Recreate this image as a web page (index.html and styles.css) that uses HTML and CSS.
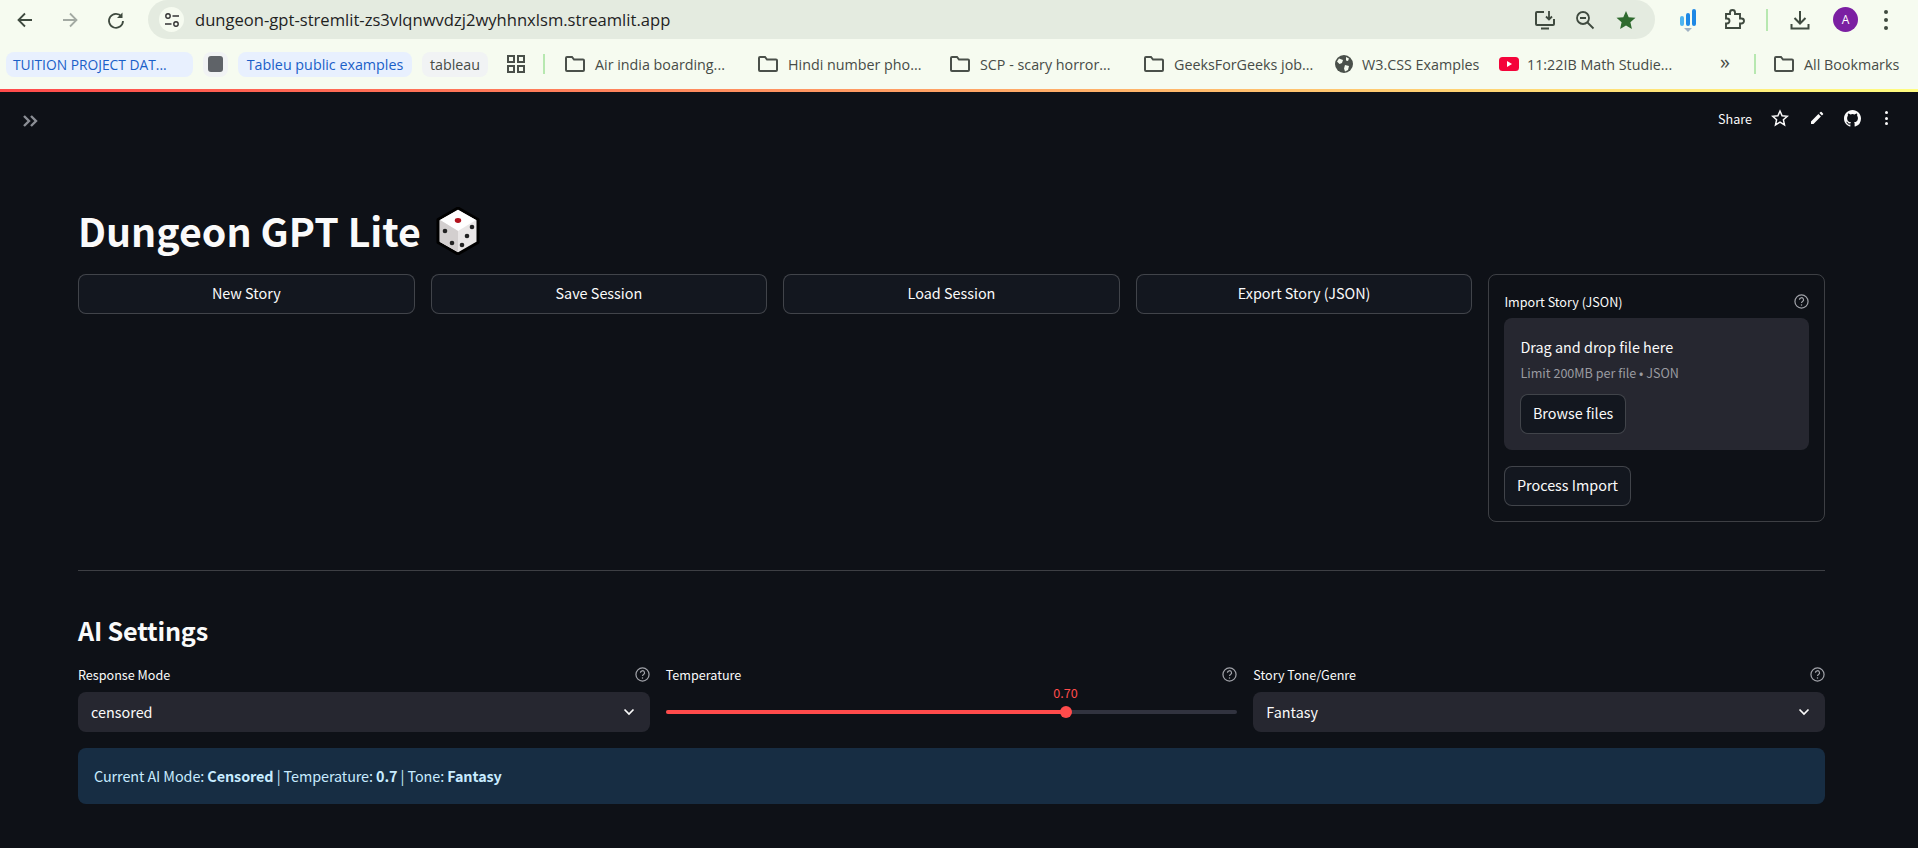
FILE: index.html
```html
<!DOCTYPE html>
<html lang="en">
<head>
    <meta charset="UTF-8">
    <title>Dungeon GPT Lite</title>
    <link rel="stylesheet" href="styles.css">
</head>
<body>
    <div class="toolbar">
        <svg class="nav-icon" width="20" height="20" viewBox="0 0 20 20"><path d="M17 10H4M10 3.500 3.500 10l6.500 6.500" fill="none" stroke="#3f4a3f" stroke-width="1.800"/></svg>
        <svg class="nav-icon forward" width="20" height="20" viewBox="0 0 20 20"><path d="M3 10h13M10 3.500l6.500 6.500-6.500 6.500" fill="none" stroke="#a3aaa3" stroke-width="1.800"/></svg>
        <svg class="nav-icon reload" width="20" height="20" viewBox="0 0 20 20"><path d="M15.500 6.500A7 7 0 1 0 17 11" fill="none" stroke="#3f4a3f" stroke-width="1.800"/><path d="M16.500 2.500v5.500h-5.500z" fill="#3f4a3f"/></svg>
        <div class="urlbar">
            <span class="site-btn">
                <svg width="16" height="16" viewBox="0 0 16 16"><circle cx="4" cy="4" r="2.200" fill="none" stroke="#333" stroke-width="1.400"/><path d="M8.500 4H15M1 12h6.500" stroke="#333" stroke-width="1.400"/><circle cx="12" cy="12" r="2.200" fill="none" stroke="#333" stroke-width="1.400"/></svg>
            </span>
            <span class="url">dungeon-gpt-stremlit-zs3vlqnwvdzj2wyhhnxlsm.streamlit.app</span>
            <svg class="url-icon" width="22" height="22" viewBox="0 0 22 22"><path d="M10 3H3a1 1 0 0 0-1 1v11a1 1 0 0 0 1 1h16a1 1 0 0 0 1-1v-5M7 19.500h8" fill="none" stroke="#3f4a3f" stroke-width="2"/><path d="M15 2v8M12 7.500l3 3 3-3" fill="none" stroke="#3f4a3f" stroke-width="1.800"/></svg>
            <svg class="url-icon zoom-out" width="20" height="20" viewBox="0 0 20 20"><circle cx="8" cy="8" r="6" fill="none" stroke="#3f4a3f" stroke-width="1.800"/><path d="M5 8h6M12.500 12.500 18.500 18.500" stroke="#3f4a3f" stroke-width="1.800"/></svg>
            <svg class="url-icon fav" width="20" height="20" viewBox="0 0 20 20"><path d="M10 1l2.700 6.200 6.800.6-5.100 4.500 1.500 6.700L10 15.500 4.100 19l1.500-6.700L.5 7.800l6.800-.6z" fill="#2f6b2f"/></svg>
        </div>
        <svg class="tool-ext" width="18" height="26" viewBox="0 0 18 26"><rect x="1" y="9" width="4" height="10" rx="2" fill="#4db4f0"/><rect x="7" y="6" width="4" height="13" rx="2" fill="#1e88e5"/><rect x="13" y="2" width="4" height="17" rx="2" fill="#1e88e5"/><path d="M5 21h8l-4 4z" fill="#9fb2c4"/></svg>
        <svg class="tool-puzzle" width="22" height="22" viewBox="0 0 22 22"><path d="M3 6h4V4.500a2.500 2.500 0 0 1 5 0V6h5v4.500h1.500a2.500 2.500 0 0 1 0 5H17V20H3v-4.500h1a2.500 2.500 0 0 0 0-5H3z" fill="none" stroke="#3f4a3f" stroke-width="1.900" transform="translate(0 -1)"/></svg>
        <span class="tool-sep"></span>
        <svg class="tool-download" width="22" height="22" viewBox="0 0 22 22"><path d="M11 2v12M5.500 9l5.500 5.500L16.500 9M2.500 15v4.500h17V15" fill="none" stroke="#3f4a3f" stroke-width="2"/></svg>
        <span class="avatar">A</span>
        <span class="tool-dots"><i></i><i></i><i></i></span>
    </div>

    <div class="bookmarks">
        <span class="chip chip-blue chip-tuition">TUITION PROJECT DAT...</span>
        <span class="chip chip-grey chip-square"><i></i></span>
        <span class="chip chip-blue chip-tableu">Tableu public examples</span>
        <span class="chip chip-grey chip-tableau">tableau</span>
        <svg class="bm-grid" width="18" height="18" viewBox="0 0 18 18"><path d="M1 1h6v6H1zM11 1h6v6h-6zM1 11h6v6H1zM11 11h6v6h-6z" fill="none" stroke="#4a504a" stroke-width="2"/></svg>
        <span class="bm-sep sep-one"></span>
        <span class="bm bm-air"><svg class="folder" viewBox="0 0 20 18"><path d="M1 3a1 1 0 0 1 1-1h5l2 2.500h9a1 1 0 0 1 1 1V15a1 1 0 0 1-1 1H2a1 1 0 0 1-1-1z" fill="none" stroke="#4a504a" stroke-width="2"/></svg>Air india boarding...</span>
        <span class="bm bm-hindi"><svg class="folder" viewBox="0 0 20 18"><path d="M1 3a1 1 0 0 1 1-1h5l2 2.500h9a1 1 0 0 1 1 1V15a1 1 0 0 1-1 1H2a1 1 0 0 1-1-1z" fill="none" stroke="#4a504a" stroke-width="2"/></svg>Hindi number pho...</span>
        <span class="bm bm-scp"><svg class="folder" viewBox="0 0 20 18"><path d="M1 3a1 1 0 0 1 1-1h5l2 2.500h9a1 1 0 0 1 1 1V15a1 1 0 0 1-1 1H2a1 1 0 0 1-1-1z" fill="none" stroke="#4a504a" stroke-width="2"/></svg>SCP - scary horror...</span>
        <span class="bm bm-geeks"><svg class="folder" viewBox="0 0 20 18"><path d="M1 3a1 1 0 0 1 1-1h5l2 2.500h9a1 1 0 0 1 1 1V15a1 1 0 0 1-1 1H2a1 1 0 0 1-1-1z" fill="none" stroke="#4a504a" stroke-width="2"/></svg>GeeksForGeeks job...</span>
        <span class="bm bm-w3"><svg class="globe" viewBox="0 0 18 18"><circle cx="9" cy="9" r="9" fill="#4a504a"/><path d="M4 3.500 8 5 7 8 4.500 9 2 6.500zM10 10l4 1-1 4-3 1.500-1-3zM11 2l3 1.500L13 6l-2-.5z" fill="#f6fbf0"/></svg>W3.CSS Examples</span>
        <span class="bm bm-yt"><svg class="yt" viewBox="0 0 20 14"><rect width="20" height="14" rx="3.500" fill="#f4043a"/><path d="M8 4l5 3-5 3z" fill="#fff"/></svg>11:22IB Math Studie...</span>
        <span class="bm-more">»</span>
        <span class="bm-sep sep-two"></span>
        <span class="bm bm-all"><svg class="folder" viewBox="0 0 20 18"><path d="M1 3a1 1 0 0 1 1-1h5l2 2.500h9a1 1 0 0 1 1 1V15a1 1 0 0 1-1 1H2a1 1 0 0 1-1-1z" fill="none" stroke="#4a504a" stroke-width="2"/></svg>All Bookmarks</span>
    </div>

    <div class="app">
        <div class="decoration"></div>
        <div class="app-header">
            <svg class="expand" width="16" height="14" viewBox="0 0 16 14"><path d="M2 2l5 5-5 5M9 2l5 5-5 5" fill="none" stroke="#8b8e95" stroke-width="2.400"/></svg>
            <div class="app-actions">
                <span class="share">Share</span>
                <svg class="act-star" width="18" height="18" viewBox="0 0 18 18"><path d="M9 2l2.100 4.800 5.200.5-3.900 3.500 1.100 5.100L9 13.200l-4.500 2.700 1.100-5.100L1.700 7.300l5.200-.5z" fill="none" stroke="#fafafa" stroke-width="1.500"/></svg>
                <svg class="act-pencil" width="16" height="16" viewBox="0 0 16 16"><path d="M2 11.500V14h2.500l7.400-7.400-2.500-2.500zM10.400 3.100l2.500 2.500 1.100-1.100a.8.8 0 0 0 0-1.100l-1.400-1.400a.8.8 0 0 0-1.100 0z" fill="#fafafa"/></svg>
                <svg class="act-github" width="17" height="17" viewBox="0 0 16 16"><path d="M8 0C3.580 0 0 3.580 0 8c0 3.540 2.290 6.530 5.470 7.590.4.070.55-.17.55-.38 0-.19-.01-.82-.01-1.490-2.010.37-2.530-.49-2.690-.94-.09-.23-.48-.94-.82-1.130-.28-.15-.68-.52-.01-.53.63-.01 1.080.58 1.230.82.720 1.210 1.870.87 2.330.66.070-.52.280-.87.510-1.070-1.780-.2-3.640-.89-3.640-3.950 0-.87.310-1.590.820-2.150-.08-.2-.36-1.020.08-2.120 0 0 .67-.21 2.200.82a7.500 7.500 0 0 1 4 0c1.530-1.040 2.200-.82 2.200-.82.440 1.100.16 1.920.08 2.120.51.560.82 1.270.82 2.150 0 3.070-1.870 3.750-3.650 3.950.29.250.54.730.54 1.480 0 1.070-.01 1.930-.01 2.200 0 .21.150.46.550.38A8.010 8.010 0 0 0 16 8c0-4.420-3.580-8-8-8z" fill="#fafafa"/></svg>
                <span class="act-dots"><i></i><i></i><i></i></span>
            </div>
        </div>

        <main class="main">
            <h1 class="title">Dungeon GPT Lite
                <svg class="dice" width="44" height="48" viewBox="0 0 44 48">
                    <path d="M22 1 42 12.500V35.500L22 47 2 35.500V12.500z" fill="#e9e6e6" stroke="#000" stroke-width="3" stroke-linejoin="round"/>
                    <path d="M22 3 40 13 22 24 4 13z" fill="#fff"/>
                    <path d="M4 13 22 24V45L4 35z" fill="#d3cfcf"/>
                    <ellipse cx="22" cy="13.500" rx="3.200" ry="2.400" fill="#b3121d"/>
                    <circle cx="9" cy="24" r="2.300" fill="#222"/><circle cx="16" cy="36" r="2.300" fill="#222"/>
                    <circle cx="36" cy="20" r="2.300" fill="#222"/><circle cx="31" cy="29" r="2.300" fill="#222"/><circle cx="26" cy="38" r="2.300" fill="#222"/>
                </svg>
            </h1>

            <div class="top-row">
                <button class="btn btn-wide">New Story</button>
                <button class="btn btn-wide">Save Session</button>
                <button class="btn btn-wide">Load Session</button>
                <button class="btn btn-wide">Export Story (JSON)</button>
                <div class="import-box">
                    <div class="label-row">
                        <span>Import Story (JSON)</span>
                        <svg class="help" viewBox="0 0 16 16"><circle cx="8" cy="8" r="7" fill="none" stroke="#a0a2a8" stroke-width="1.300"/><path d="M5.800 6.200a2.200 2.200 0 1 1 3.300 1.900c-.7.4-1.100.8-1.100 1.600" fill="none" stroke="#a0a2a8" stroke-width="1.300"/><circle cx="8" cy="11.700" r=".8" fill="#a0a2a8"/></svg>
                    </div>
                    <div class="dropzone">
                        <div class="drop-title">Drag and drop file here</div>
                        <div class="drop-limit">Limit 200MB per file • JSON</div>
                        <button class="btn">Browse files</button>
                    </div>
                    <button class="btn process">Process Import</button>
                </div>
            </div>

            <hr class="divider">

            <h3 class="section">AI Settings</h3>

            <div class="settings">
                <div class="field">
                    <div class="label-row">
                        <span>Response Mode</span>
                        <svg class="help" viewBox="0 0 16 16"><circle cx="8" cy="8" r="7" fill="none" stroke="#a0a2a8" stroke-width="1.300"/><path d="M5.800 6.200a2.200 2.200 0 1 1 3.300 1.900c-.7.4-1.100.8-1.100 1.600" fill="none" stroke="#a0a2a8" stroke-width="1.300"/><circle cx="8" cy="11.700" r=".8" fill="#a0a2a8"/></svg>
                    </div>
                    <div class="select">censored
                        <svg width="12" height="8" viewBox="0 0 12 8"><path d="M1.500 1.500 6 6l4.500-4.500" fill="none" stroke="#fafafa" stroke-width="1.700"/></svg>
                    </div>
                </div>
                <div class="field">
                    <div class="label-row">
                        <span>Temperature</span>
                        <svg class="help" viewBox="0 0 16 16"><circle cx="8" cy="8" r="7" fill="none" stroke="#a0a2a8" stroke-width="1.300"/><path d="M5.800 6.200a2.200 2.200 0 1 1 3.300 1.900c-.7.4-1.100.8-1.100 1.600" fill="none" stroke="#a0a2a8" stroke-width="1.300"/><circle cx="8" cy="11.700" r=".8" fill="#a0a2a8"/></svg>
                    </div>
                    <div class="slider">
                        <div class="track">
                            <div class="fill" style="width: 70%">
                                <span class="thumb"></span>
                                <span class="thumb-value">0.70</span>
                            </div>
                        </div>
                    </div>
                </div>
                <div class="field">
                    <div class="label-row">
                        <span>Story Tone/Genre</span>
                        <svg class="help" viewBox="0 0 16 16"><circle cx="8" cy="8" r="7" fill="none" stroke="#a0a2a8" stroke-width="1.300"/><path d="M5.800 6.200a2.200 2.200 0 1 1 3.300 1.900c-.7.4-1.100.8-1.100 1.600" fill="none" stroke="#a0a2a8" stroke-width="1.300"/><circle cx="8" cy="11.700" r=".8" fill="#a0a2a8"/></svg>
                    </div>
                    <div class="select">Fantasy
                        <svg width="12" height="8" viewBox="0 0 12 8"><path d="M1.500 1.500 6 6l4.500-4.500" fill="none" stroke="#fafafa" stroke-width="1.700"/></svg>
                    </div>
                </div>
            </div>

            <div class="info">Current AI Mode: <b>Censored</b> | Temperature: <b>0.7</b> | Tone: <b>Fantasy</b></div>
        </main>
    </div>
</body>
</html>
```

FILE: styles.css
```css
* {
    box-sizing: border-box;
}
html, body {
    margin: 0;
    height: 848px;
    overflow: hidden;
}
body {
    font-family: "Noto Sans CJK JP", "Noto Sans", sans-serif;
    background-color: #0e1117;
    color: #fafafa;
}

/* browser chrome */
.toolbar {
    height: 39px;
    background-color: #f6fbf0;
    display: flex;
    align-items: center;
    font-family: "Open Sans", sans-serif;
}
.nav-icon {
    margin-left: 15px;
    flex: none;
}
.nav-icon.forward {
    margin-left: 25px;
}
.nav-icon.reload {
    margin-left: 26px;
}
.urlbar {
    margin-left: 22px;
    width: 1507px;
    height: 39px;
    background-color: #e4ebe0;
    border-radius: 20px;
    display: flex;
    align-items: center;
    padding-left: 11px;
}
.site-btn {
    width: 25px;
    height: 25px;
    border-radius: 50%;
    background-color: #f6fbf0;
    display: flex;
    align-items: center;
    justify-content: center;
}
.url {
    margin-left: 11px;
    font-size: 16.6px;
    color: #1f231f;
    flex: 1;
    white-space: nowrap;
}
.url-icon {
    margin-right: 19px;
}
.zoom-out {
    margin-right: 21px;
}
.fav {
    margin-right: 19px;
}
.tool-ext {
    margin-left: 24px;
}
.tool-puzzle {
    margin-left: 26px;
}
.tool-sep {
    margin-left: 21px;
    width: 2px;
    height: 22px;
    background-color: #b7e8b0;
}
.tool-download {
    margin-left: 21px;
}
.avatar {
    margin-left: 22px;
    width: 25px;
    height: 25px;
    border-radius: 50%;
    background-color: #7b1fa2;
    color: #fff;
    font-size: 12px;
    display: flex;
    align-items: center;
    justify-content: center;
}
.tool-dots {
    margin-left: 26px;
    display: flex;
    flex-direction: column;
    gap: 4px;
}
.tool-dots i {
    width: 4px;
    height: 4px;
    border-radius: 50%;
    background-color: #3f4a3f;
}

.bookmarks {
    height: 51px;
    background-color: #f6fbf0;
    display: flex;
    align-items: center;
    padding-bottom: 1px;
    font-family: "Open Sans", sans-serif;
    font-size: 14.3px;
    color: #474c47;
    white-space: nowrap;
}
.chip {
    height: 25px;
    border-radius: 8px;
    display: flex;
    align-items: center;
    justify-content: center;
    flex: none;
}
.chip-blue {
    background-color: #e8f0fe;
    color: #1a5fc8;
    font-weight: 500;
}
.chip-grey {
    background-color: #f1f3f4;
}
.chip-tuition {
    margin-left: 6px;
    width: 187px;
    font-size: 13.8px;
    justify-content: flex-start;
    padding-left: 7px;
}
.chip-square {
    margin-left: 10px;
    width: 25px;
}
.chip-square i {
    width: 15px;
    height: 16px;
    border-radius: 3px;
    background-color: #5f6368;
}
.chip-tableu {
    margin-left: 10px;
    width: 174px;
}
.chip-tableau {
    margin-left: 10px;
    width: 66px;
}
.bm-grid {
    margin-left: 19px;
    flex: none;
}
.bm-sep {
    width: 2px;
    height: 20px;
    background-color: #b7e8b0;
    flex: none;
}
.sep-one {
    margin-left: 18px;
}
.sep-two {
    margin-left: 20px;
}
.bm {
    display: flex;
    align-items: center;
    flex: none;
}
.folder {
    width: 20px;
    height: 18px;
    margin-right: 10px;
}
.globe {
    width: 18px;
    height: 18px;
    margin-right: 9px;
}
.yt {
    width: 20px;
    height: 14px;
    margin-right: 8px;
}
.bm-air {
    margin-left: 20px;
    width: 193px;
}
.bm-hindi {
    width: 192px;
}
.bm-scp {
    width: 194px;
}
.bm-geeks {
    width: 191px;
}
.bm-w3 {
    width: 164px;
}
.bm-yt {
    width: 218px;
}
.bm-more {
    font-size: 20px;
    line-height: 20px;
    margin-top: -4px;
    width: 14px;
    margin-left: 3px;
}
.bm-all {
    margin-left: 18px;
}

/* streamlit app */
.app {
    height: 758px;
}
.decoration {
    height: 3px;
    margin-top: -1px;
    background-image: linear-gradient(90deg, #ff4b4b, #fffd80);
}
.app-header {
    height: 56px;
    display: flex;
    align-items: center;
    justify-content: space-between;
    padding: 0 30px 4px 22px;
}
.expand {
    margin-top: 6px;
}
.app-actions {
    display: flex;
    align-items: center;
}
.share {
    font-size: 12.6px;
    margin-right: 19px;
}
.act-star {
    margin-right: 20px;
}
.act-pencil {
    margin-right: 19px;
}
.act-github {
    margin-right: 24px;
}
.act-dots {
    display: flex;
    flex-direction: column;
    gap: 2.500px;
}
.act-dots i {
    width: 3px;
    height: 3px;
    border-radius: 50%;
    background-color: #fafafa;
}

.main {
    padding: 0 93px 0 78px;
}
.title {
    margin: 55px 0 0;
    font-size: 39.3px;
    line-height: 54px;
    font-weight: 700;
    height: 71px;
    display: flex;
    align-items: flex-start;
    gap: 15px;
}
.dice {
    margin-top: 4px;
}
.top-row {
    display: grid;
    grid-template-columns: repeat(5, 1fr);
    gap: 16px;
    align-items: start;
}
.btn {
    height: 40px;
    padding: 0 11.5px 3px;
    background-color: #13171f;
    color: #fafafa;
    border: 1px solid rgba(250, 250, 250, 0.2);
    border-radius: 8px;
    font-family: inherit;
    font-size: 14.4px;
}
.btn-wide {
    width: 100%;
}
.import-box {
    height: 248px;
    border: 1px solid rgba(250, 250, 250, 0.2);
    border-radius: 8px;
    padding: 14px 15px 15px;
}
.label-row {
    display: flex;
    justify-content: space-between;
    align-items: center;
    height: 24px;
    font-size: 12.6px;
}
.help {
    width: 15px;
    height: 15px;
}
.dropzone {
    margin-top: 5px;
    height: 132px;
    background-color: #262730;
    border-radius: 8px;
    padding: 16px;
}
.drop-title {
    font-size: 14.4px;
    line-height: 26px;
}
.drop-limit {
    font-size: 12.6px;
    line-height: 26px;
    color: #9a9ba0;
}
.dropzone .btn {
    margin-top: 8px;
}
.process {
    margin-top: 16px;
}
.divider {
    margin: 48px 0 0;
    border: none;
    border-top: 1px solid rgba(250, 250, 250, 0.2);
}
.section {
    margin: 41px 0 0;
    font-size: 25.2px;
    line-height: 36px;
    font-weight: 600;
    letter-spacing: -0.2px;
}
.settings {
    margin-top: 14px;
    display: grid;
    grid-template-columns: repeat(3, 1fr);
    gap: 16px;
}
.select {
    margin-top: 6px;
    height: 40px;
    background-color: #262730;
    border-radius: 8px;
    display: flex;
    justify-content: space-between;
    align-items: center;
    padding: 0 15px 2px 13px;
    font-size: 14.4px;
}
.select svg {
    margin-top: 2px;
}
.slider {
    height: 40px;
    margin-top: 6px;
    display: flex;
    align-items: center;
}
.track {
    width: 100%;
    height: 4px;
    border-radius: 2px;
    background-color: #31333f;
}
.fill {
    position: relative;
    height: 4px;
    border-radius: 2px;
    background-color: #ff4b4b;
}
.thumb {
    position: absolute;
    right: -6px;
    top: -4px;
    width: 12px;
    height: 12px;
    border-radius: 50%;
    background-color: #ff4b4b;
}
.thumb-value {
    position: absolute;
    right: -12px;
    top: -27px;
    font-size: 12.6px;
    line-height: 20px;
    color: #ff4b4b;
}
.info {
    margin-top: 16px;
    height: 56px;
    background-color: #172d43;
    color: #c7ebff;
    border-radius: 8px;
    padding: 0 16px 2px;
    display: flex;
    align-items: center;
    white-space: pre;
    font-size: 14.4px;
    letter-spacing: -0.09px;
}
```
